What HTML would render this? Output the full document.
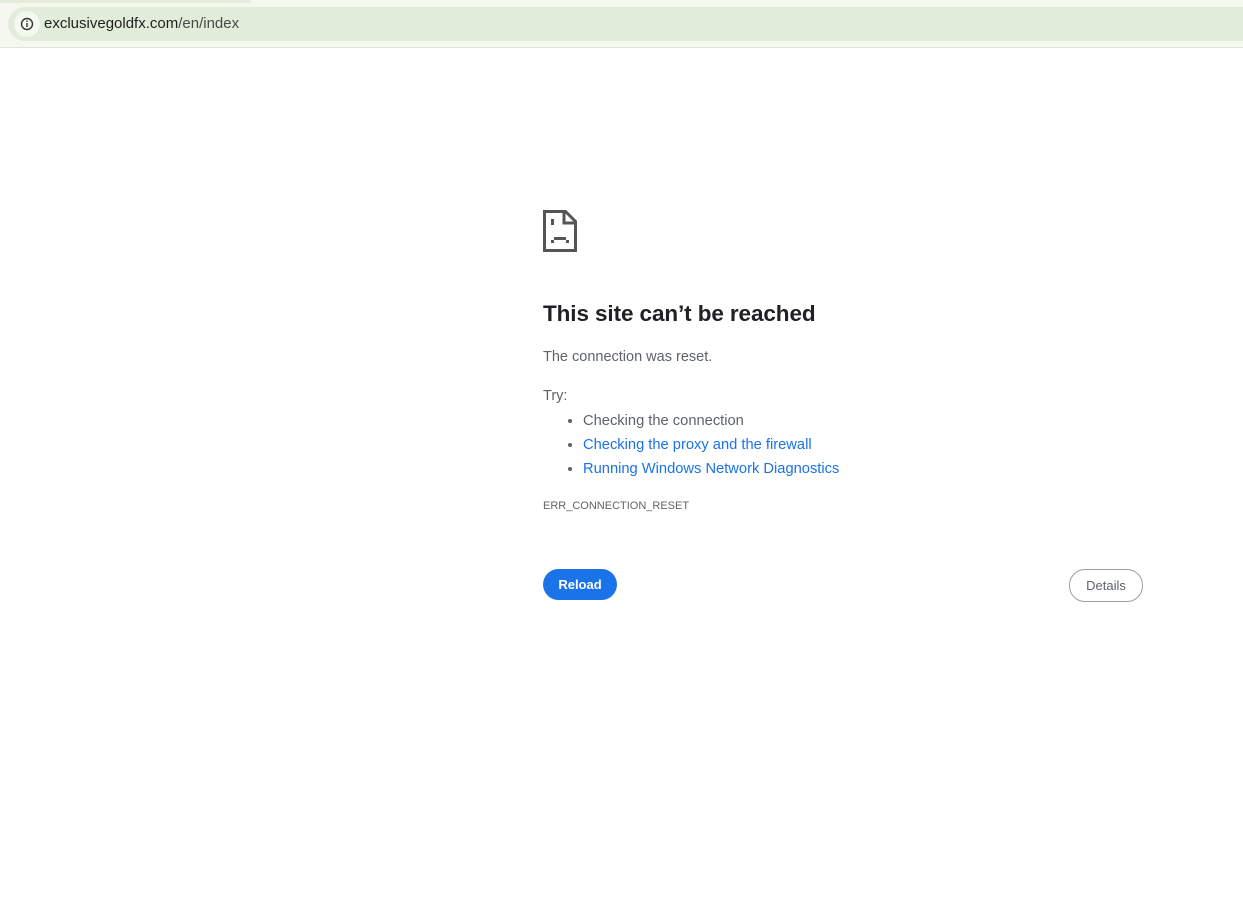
<!DOCTYPE html>
<html><head><meta charset="utf-8"><style>
html,body{margin:0;padding:0;width:1243px;height:911px;background:#fff;overflow:hidden;font-family:"Liberation Sans",sans-serif}
.top{position:absolute;left:0;top:0;width:1243px;height:47px;background:#f4f8ef;border-bottom:1px solid #dfe6d8}
.tabline{position:absolute;left:0;top:0;width:250px;height:3px;background:#e4ecdc}
.omni{position:absolute;left:8px;top:7px;width:1235px;height:34px;background:#e2ecda;border-radius:17px 0 0 17px}
.ic{position:absolute;left:6px;top:4px;width:26px;height:26px;border-radius:13px;background:#f4f8ef}
.url{position:absolute;left:36px;top:8px;font-size:15px;color:#1f1f1f}
.url span{color:#4a4a4a}
.main{position:absolute;left:543px;top:0}
h1{position:absolute;top:301px;left:0;margin:0;font-size:22.5px;font-weight:bold;color:#202124;white-space:nowrap;letter-spacing:-0.1px}
.t{position:absolute;left:0;font-size:14.5px;color:#5f6368;white-space:nowrap}
ul{position:absolute;left:0;top:409px;margin:0;padding-left:40px;font-size:14.7px;color:#5f6368;line-height:24px;white-space:nowrap}
a{color:#1a73e8;text-decoration:none}
.btn{position:absolute;top:569px;left:0;width:74px;height:31px;border-radius:16px;background:#1a73e8;color:#fff;font-size:13px;font-weight:bold;text-align:center;line-height:31px}
.det{position:absolute;top:569px;left:1069px;width:72px;height:31px;border:1px solid #9aa0a6;border-radius:16px;color:#5f6368;font-size:13px;text-align:center;line-height:31px}
</style></head><body>
<div class="top"><div class="tabline"></div><div class="omni"><div class="ic"><svg width="26" height="26" viewBox="0 0 26 26"><circle cx="13" cy="13" r="5.5" fill="none" stroke="#333" stroke-width="1.4"/><rect x="12.3" y="12" width="1.4" height="4" fill="#333"/><rect x="12.3" y="9.6" width="1.4" height="1.4" fill="#333"/></svg></div><div class="url">exclusivegoldfx.com<span>/en/index</span></div></div></div>
<div class="main">
<svg style="position:absolute;left:0;top:210px" width="34" height="42" viewBox="0 0 34 42">
<path d="M1.5 1.5H22.5L32.5 11.5V40.5H1.5Z" fill="none" stroke="#555" stroke-width="3"/>
<path d="M21 1.5V13H32.5" fill="none" stroke="#555" stroke-width="3"/>
<rect x="8" y="9" width="3" height="6" fill="#555"/>
<rect x="11" y="27" width="12" height="3" fill="#555"/>
<rect x="8" y="30" width="3" height="3" fill="#555"/>
<rect x="23" y="30" width="3" height="3" fill="#555"/>
</svg>
<h1>This site can’t be reached</h1>
<div class="t" style="top:349px">The connection was reset.</div>
<div class="t" style="top:388px">Try:</div>
<ul><li>Checking the connection</li><li><a>Checking the proxy and the firewall</a></li><li><a>Running Windows Network Diagnostics</a></li></ul>
<div class="t" style="top:500px;font-size:11px">ERR_CONNECTION_RESET</div>
<div class="btn">Reload</div>
</div>
<div class="det">Details</div>
</body></html>
